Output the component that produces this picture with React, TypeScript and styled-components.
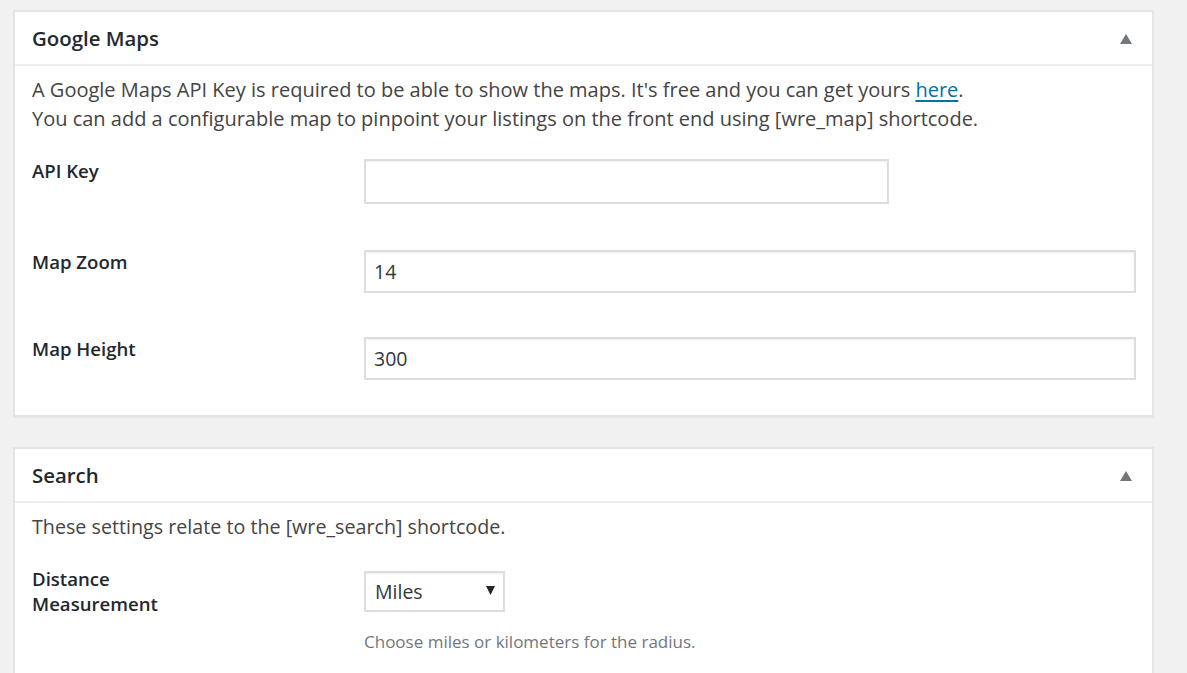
import React from 'react'
import styled, { createGlobalStyle } from 'styled-components'

const GlobalStyle = createGlobalStyle`
  html, body {
    margin: 0;
    padding: 0;
    background: #f1f1f1;
  }
  body {
    font-family: 'Open Sans', 'Noto Sans', sans-serif;
    color: #444;
    overflow: hidden;
  }
`

const Page = styled.div`
  padding: 10px 0 0 13px;
  width: 1141px;
  display: flex;
  flex-direction: column;
  gap: 30px;
`

const Panel = styled.section`
  background: #fff;
  border: 2px solid #e5e5e5;
  box-shadow: 0 1px 1px rgba(0, 0, 0, 0.04);
`

const PanelHeader = styled.header`
  height: 52px;
  display: flex;
  align-items: center;
  justify-content: space-between;
  padding: 0 20px 0 17px;
  border-bottom: 2px solid #eee;
`

const PanelTitle = styled.h2`
  margin: 0;
  font-size: 20.4px;
  font-weight: 600;
  color: #23282d;
`

const Toggle = styled.svg`
  width: 12px;
  height: 10px;
  fill: #72777c;
  margin-top: 1px;
`

const PanelBody = styled.div`
  padding: 0 17px 13px 17px;
`

const Intro = styled.p<{ $size?: number }>`
  margin: 9px 0 4px;
  font-size: ${(p) => p.$size ?? 20}px;
  line-height: 29px;
  color: #444;

  a {
    color: #0073aa;
    text-decoration: underline;
    text-underline-offset: 3px;
  }
`

const Row = styled.div`
  display: grid;
  grid-template-columns: 332px 1fr;
`

const Label = styled.label`
  padding-top: 21px;
  font-size: 18.6px;
  line-height: 25px;
  font-weight: 600;
  color: #23282d;
  width: 160px;
`

const Field = styled.div<{ $top?: number; $bottom?: number }>`
  padding: ${(p) => p.$top ?? 22}px 0 ${(p) => p.$bottom ?? 22}px;
  display: flex;
  flex-direction: column;
  align-items: flex-start;
`

const TextInput = styled.input<{ $wide?: boolean; $tall?: boolean }>`
  box-sizing: border-box;
  width: ${(p) => (p.$wide ? '772px' : '525px')};
  height: ${(p) => (p.$tall ? '45px' : '43px')};
  border: 2px solid #ddd;
  box-shadow: inset 0 1px 2px rgba(0, 0, 0, 0.07);
  padding: 0 8px;
  font-family: inherit;
  font-size: 19.5px;
  color: #32373c;
  background: #fff;
  outline: none;
`

const SelectBox = styled.div`
  box-sizing: border-box;
  width: 141px;
  height: 41px;
  border: 2px solid #ddd;
  box-shadow: inset 0 1px 2px rgba(0, 0, 0, 0.07);
  display: flex;
  align-items: center;
  justify-content: space-between;
  padding: 0 8px 0 9px;
  font-size: 19.5px;
  color: #32373c;
  background: #fff;
`

const SelectArrow = styled.svg`
  width: 9px;
  height: 9px;
  fill: #23282d;
  margin-top: -2px;
`

const Help = styled.p`
  margin: 16px 0 0;
  font-size: 17px;
  line-height: 27px;
  color: #72777c;
`

const UpArrow = () => (
  <Toggle viewBox="0 0 12 10">
    <polygon points="6,0 12,10 0,10" />
  </Toggle>
)

export default function App() {
  return (
    <>
      <GlobalStyle />
      <Page>
        <Panel>
          <PanelHeader>
            <PanelTitle>Google Maps</PanelTitle>
            <UpArrow />
          </PanelHeader>
          <PanelBody>
            <Intro>
              A Google Maps API Key is required to be able to show the maps. It's free and you can
              get yours <a href="#">here</a>.
              <br />
              You can add a configurable map to pinpoint your listings on the front end using
              [wre_map] shortcode.
            </Intro>
            <Row>
              <Label>API Key</Label>
              <Field $bottom={24}>
                <TextInput $tall defaultValue="" />
              </Field>
            </Row>
            <Row>
              <Label>Map Zoom</Label>
              <Field>
                <TextInput $wide defaultValue="14" />
              </Field>
            </Row>
            <Row>
              <Label>Map Height</Label>
              <Field>
                <TextInput $wide defaultValue="300" />
              </Field>
            </Row>
          </PanelBody>
        </Panel>

        <Panel>
          <PanelHeader>
            <PanelTitle>Search</PanelTitle>
            <UpArrow />
          </PanelHeader>
          <PanelBody>
            <Intro $size={19.7}>These settings relate to the [wre_search] shortcode.</Intro>
            <Row>
              <Label>Distance Measurement</Label>
              <Field $top={26}>
                <SelectBox>
                  <span>Miles</span>
                  <SelectArrow viewBox="0 0 9 9">
                    <polygon points="0,0 9,0 4.5,9" />
                  </SelectArrow>
                </SelectBox>
                <Help>Choose miles or kilometers for the radius.</Help>
              </Field>
            </Row>
          </PanelBody>
        </Panel>
      </Page>
    </>
  )
}
